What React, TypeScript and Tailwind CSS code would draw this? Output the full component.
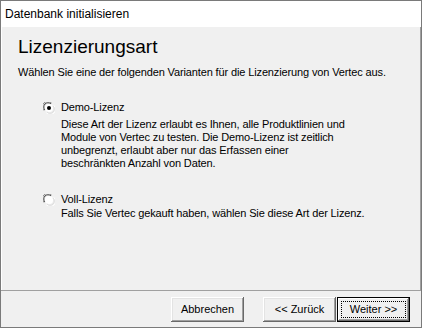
import React from 'react'

const font = { fontFamily: '"Liberation Sans", Arial, sans-serif' }

function Radio({ checked }: { checked: boolean }) {
  return (
    <span className="relative mt-[1px] block h-[12px] w-[12px] shrink-0">
      <svg width="12" height="12" viewBox="0 0 12 12">
        <path d="M1 8.5 A5 5 0 0 1 8.5 1" fill="none" stroke="#808080" strokeWidth="1" />
        <path d="M2 8 A4.2 4.2 0 0 1 8 2" fill="none" stroke="#404040" strokeWidth="1" />
        <circle cx="6" cy="6" r="4" fill="#fff" />
        <path d="M11 3.5 A5 5 0 0 1 3.5 11" fill="none" stroke="#fff" strokeWidth="1" />
        <path d="M10 4 A4.2 4.2 0 0 1 4 10" fill="none" stroke="#dcdcdc" strokeWidth="1" />
        {checked && <circle cx="6" cy="6" r="2" fill="#000" />}
      </svg>
    </span>
  )
}

function Button({ label, isDefault }: { label: string; isDefault?: boolean }) {
  if (isDefault) {
    return (
      <button className="h-[25px] w-[73px] border border-black bg-[#f0f0f0] p-0 text-[11px] text-black shadow-[inset_-1px_-1px_0_#696969,inset_1px_1px_0_#fff,inset_-2px_-2px_0_#a0a0a0]">
        <span className="m-[3px] flex h-[17px] items-center justify-center border border-dotted border-black">
          {label}
        </span>
      </button>
    )
  }
  return (
    <button className="h-[25px] w-[73px] bg-[#f0f0f0] p-0 text-[11px] text-black shadow-[inset_-1px_-1px_0_#696969,inset_1px_1px_0_#fff,inset_-2px_-2px_0_#a0a0a0,inset_2px_2px_0_#e3e3e3]">
      {label}
    </button>
  )
}

export default function App() {
  return (
    <div
      className="flex h-[328px] w-[422px] flex-col border border-[#7a7a7a] bg-[#f0f0f0] text-black"
      style={font}
    >
      <div className="h-[26px] bg-white pl-[4px] pt-[6px] text-[12px] leading-[14px]">
        Datenbank initialisieren
      </div>

      <div className="flex-1 border-l border-r border-l-white border-r-[#a0a0a0] pl-[16px] pt-[8px]">
        <h1 className="text-[19px] leading-[24px]">Lizenzierungsart</h1>
        <p className="mt-[7px] text-[11px] leading-[13px] tracking-[-0.13px]">
          Wählen Sie eine der folgenden Varianten für die Lizenzierung von Vertec aus.
        </p>

        <div className="ml-[25px] mt-[22px] flex gap-[6px]">
          <Radio checked />
          <div className="text-[11px] leading-[13px] tracking-[-0.13px]">
            <div>Demo-Lizenz</div>
            <div className="mt-[4px]">
              Diese Art der Lizenz erlaubt es Ihnen, alle Produktlinien und
              <br />
              Module von Vertec zu testen. Die Demo-Lizenz ist zeitlich
              <br />
              unbegrenzt, erlaubt aber nur das Erfassen einer
              <br />
              beschränkten Anzahl von Daten.
            </div>
          </div>
        </div>

        <div className="ml-[25px] mt-[23px] flex gap-[6px]">
          <Radio checked={false} />
          <div className="text-[11px] leading-[13px] tracking-[-0.13px]">
            <div>Voll-Lizenz</div>
            <div className="mt-[1px]">
              Falls Sie Vertec gekauft haben, wählen Sie diese Art der Lizenz.
            </div>
          </div>
        </div>
      </div>

      <div className="flex h-[37px] items-center justify-end border-t border-[#a0a0a0] pr-[11px]">
        <Button label="Abbrechen" />
        <div className="ml-[19px] flex gap-[1px]">
          <Button label="<< Zurück" />
          <Button label="Weiter >>" isDefault />
        </div>
      </div>
    </div>
  )
}
